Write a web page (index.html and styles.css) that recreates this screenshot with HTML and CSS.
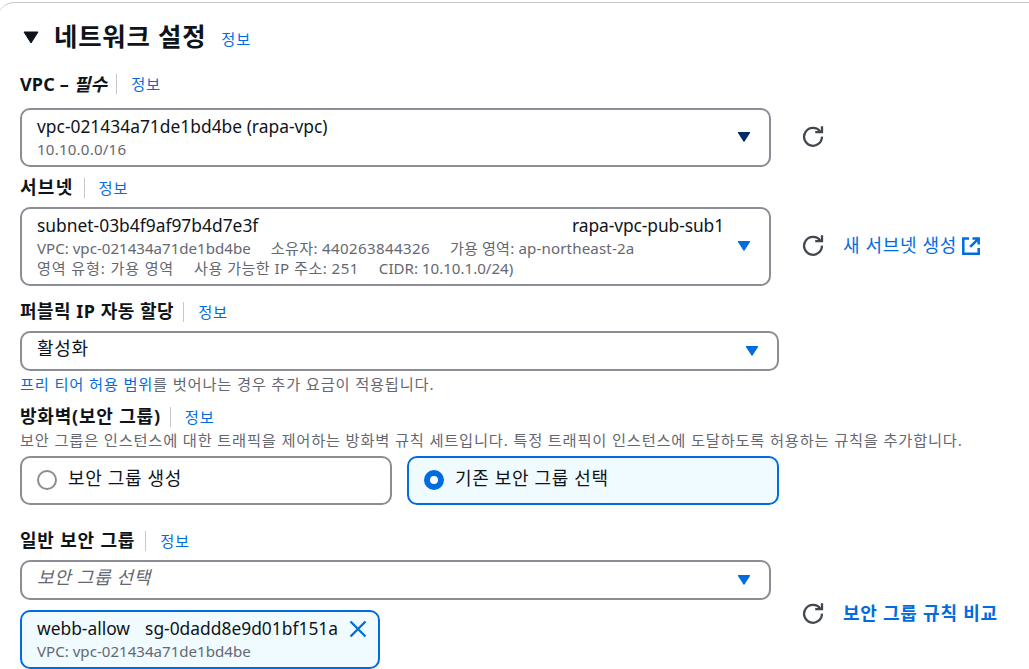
FILE: index.html
```
<!DOCTYPE html>
<html lang="ko">
<head>
<meta charset="utf-8">
<title>네트워크 설정</title>
<link rel="stylesheet" href="styles.css">
</head>
<body>
<svg width="0" height="0" class="defs" aria-hidden="true">
  <symbol id="refresh" viewBox="0 0 22 22"><path d="M18.2 6.6A8.9 8.9 0 1 0 19.9 11.6M20 1.2V7.2H13.2" fill="none" stroke="#424650" stroke-width="2.3"/></symbol>
  <symbol id="caret" viewBox="0 0 14 12"><path d="M1.5 1.6H12.5L7 10.2Z" fill="currentColor" stroke="currentColor" stroke-width="1.2" stroke-linejoin="round"/></symbol>
</svg>
<section class="panel">
  <header class="head">
    <svg class="head-caret" viewBox="0 0 16 13"><path d="M1 1H15L8 12Z" fill="#0f141a" stroke="#0f141a" stroke-linejoin="round"/></svg>
    <h2 class="t-head">네트워크 설정</h2><a class="info">정보</a>
  </header>

  <div class="label label-vpc"><b>VPC – <i>필수</i></b><a class="info">정보</a></div>
  <div class="row">
    <div class="select select-vpc">
      <div class="content"><div class="t-main">vpc-021434a71de1bd4be (rapa-vpc)</div><div class="t-sub sub-cidr">10.10.0.0/16</div></div>
      <svg class="caret dark"><use href="#caret"/></svg>
    </div>
    <svg class="refresh"><use href="#refresh"/></svg>
  </div>

  <div class="label label-subnet"><b>서브넷</b><a class="info">정보</a></div>
  <div class="row">
    <div class="select select-subnet">
      <div class="content">
        <div class="t-main split"><span>subnet-03b4f9af97b4d7e3f</span><span class="t-name">rapa-vpc-pub-sub1</span></div>
        <div class="t-sub meta"><span>VPC: vpc-021434a71de1bd4be</span><span class="owner">소유자: 440263844326</span><span class="zone">가용 영역: ap-northeast-2a</span></div>
        <div class="t-sub meta"><span class="zone-type">영역 유형: 가용 영역</span><span class="free-ips">사용 가능한 IP 주소: 251</span><span>CIDR: 10.10.1.0/24)</span></div>
      </div>
      <svg class="caret"><use href="#caret"/></svg>
    </div>
    <svg class="refresh"><use href="#refresh"/></svg>
    <a class="link"><span class="t-ko">새 서브넷 생성</span><svg class="ext" viewBox="0 0 18 18"><path d="M7 1.4H1.3V16.7H16.7V11M10.5 1.4H16.7V7.6M16.3 1.8L8.2 9.9" fill="none" stroke="currentColor" stroke-width="2.5"/></svg></a>
  </div>

  <div class="label label-ip"><b>퍼블릭 IP 자동 할당</b><a class="info">정보</a></div>
  <div class="select select-ip"><div class="t-ko">활성화</div><svg class="caret"><use href="#caret"/></svg></div>
  <p class="hint hint-free"><a>프리 티어 허용 범위</a>를 벗어나는 경우 추가 요금이 적용됩니다.</p>

  <div class="label label-fw"><b>방화벽(보안 그룹)</b><a class="info">정보</a></div>
  <p class="hint hint-fw">보안 그룹은 인스턴스에 대한 트래픽을 제어하는 방화벽 규칙 세트입니다. 특정 트래픽이 인스턴스에 도달하도록 허용하는 규칙을 추가합니다.</p>
  <div class="tiles">
    <div class="tile"><span class="radio"></span><span class="t-ko">보안 그룹 생성</span></div>
    <div class="tile on"><span class="radio"></span><span class="t-ko">기존 보안 그룹 선택</span></div>
  </div>

  <div class="label label-sg"><b>일반 보안 그룹</b><a class="info">정보</a></div>
  <div class="row">
    <div class="stack">
      <div class="select select-sg"><div class="t-ko placeholder">보안 그룹 선택</div><svg class="caret"><use href="#caret"/></svg></div>
      <div class="token">
        <div class="token-top"><span class="t-main">webb-allow</span><span class="t-main">sg-0dadd8e9d01bf151a</span><svg class="close" viewBox="0 0 18 18"><path d="M1.5 1.5L16.5 16.5M16.5 1.5L1.5 16.5" stroke="#006ce0" stroke-width="2.3"/></svg></div>
        <div class="t-sub">VPC: vpc-021434a71de1bd4be</div>
      </div>
    </div>
    <svg class="refresh"><use href="#refresh"/></svg>
    <a class="link strong">보안 그룹 규칙 비교</a>
  </div>
</section>
</body>
</html>
```
FILE: styles.css
```
* { box-sizing: border-box; }
body { margin: 0; width: 1029px; height: 669px; overflow: hidden; background: #fff; color: #0f141a; font-family: "Noto Sans", "Noto Sans CJK KR", sans-serif; font-size: 17.5px; }
h2, p { margin: 0; }
a { color: #006ce0; }
svg { flex: none; }
.defs { position: absolute; }

.panel { margin: 2px -20px 0 -3px; height: 680px; padding-left: 23px; border: 1px solid #c6c6cd; border-left: 0; border-radius: 18px; white-space: nowrap; }
.head { display: flex; height: 70px; align-items: center; padding: 0 0 4px 2px; }
.head-caret { width: 16px; height: 13px; margin: 2px 15px 0 1px; }
.t-head { font-size: 25.4px; line-height: 36px; font-weight: 700; letter-spacing: .8px; }
.info { font-size: 15.3px; line-height: 20px; letter-spacing: .8px; }
.head .info { margin: 6px 0 0 15px; }

.label { display: flex; align-items: center; height: 24px; margin-bottom: 7px; }
.label b { font-size: 18px; line-height: 24px; letter-spacing: .8px; padding-bottom: 3px; }
.label .info { margin-left: 9px; padding-left: 14px; border-left: 1px solid #c6c6cd; }
.label-vpc { margin-bottom: 11px; }
.label-vpc b { letter-spacing: .15px; }
.label-vpc .info { margin-bottom: 2px; }
.label-subnet { margin-top: 9px; }
.label-subnet b { letter-spacing: 1.3px; }
.label-subnet .info { margin-left: 10px; }
.label-ip { margin-top: 14px; }
.label-ip b { letter-spacing: .5px; }
.label-fw { margin: 10px 0 1px; }
.label-sg { margin-top: 24px; }
.label-sg .info { margin-left: 10px; }

.row { display: flex; align-items: center; }
.select { display: flex; align-items: center; justify-content: space-between; width: 751px; border: 2px solid #8c8c94; border-radius: 10px; padding: 0 18px 0 15px; }
.select-vpc { height: 59px; }
.select-subnet { height: 79px; }
.select-ip { width: 759px; height: 40px; }
.select-sg { height: 40px; }
.content { width: 687px; padding-bottom: 2px; }
.caret { width: 14px; height: 12px; color: #006ce0; margin-bottom: 1px; }
.dark { color: #002b66; }
.refresh { width: 22px; height: 22px; margin: 0 0 4px 31px; }

.t-main { font-size: 17.4px; line-height: 22px; padding-bottom: 2px; color: #0f141a; }
.t-name { letter-spacing: -.1px; }
.t-ko { font-size: 18px; line-height: 26px; letter-spacing: .65px; padding-bottom: 5px; }
.select .t-ko { padding-bottom: 7px; }
.t-sub { font-size: 15.1px; line-height: 20px; color: #656871; }
.sub-cidr { letter-spacing: .2px; }
.split { display: flex; justify-content: space-between; }
.meta { display: flex; gap: 20px; }
.owner { letter-spacing: .35px; }
.zone { letter-spacing: .15px; }
.zone-type { letter-spacing: .85px; }
.free-ips { letter-spacing: .45px; }

.link { display: flex; align-items: center; margin-left: 19px; }
.link .t-ko { padding-bottom: 4px; }
.ext { width: 18px; height: 18px; margin: 0 0 2px 5px; }
.strong { font-size: 18px; font-weight: 700; letter-spacing: .75px; padding-bottom: 6px; }

.hint { font-size: 15.3px; line-height: 20px; letter-spacing: .78px; color: #656871; }
.hint-free { margin-top: 3px; padding-bottom: 1px; }
.tiles { display: flex; gap: 15px; margin-top: 6px; }
.tile { display: flex; align-items: center; width: 372px; height: 49px; padding-left: 15px; border: 2px solid #8c8c94; border-radius: 10px; }
.on { background: #f0fbff; border-color: #006ce0; }
.radio { width: 20px; height: 20px; margin: 0 11px 1px 0; border: 2px solid #8c8c94; border-radius: 50%; background: #fff; }
.on .radio { border: 6px solid #006ce0; }
.placeholder { font-style: italic; color: #656871; }

.token { width: 360px; height: 59px; margin-top: 10px; padding: 5px 11px 0 15px; border: 2px solid #006ce0; border-radius: 10px; background: #f0fbff; }
.token-top { display: flex; align-items: center; gap: 15px; }
.close { width: 18px; height: 18px; margin-left: -4px; }
```
